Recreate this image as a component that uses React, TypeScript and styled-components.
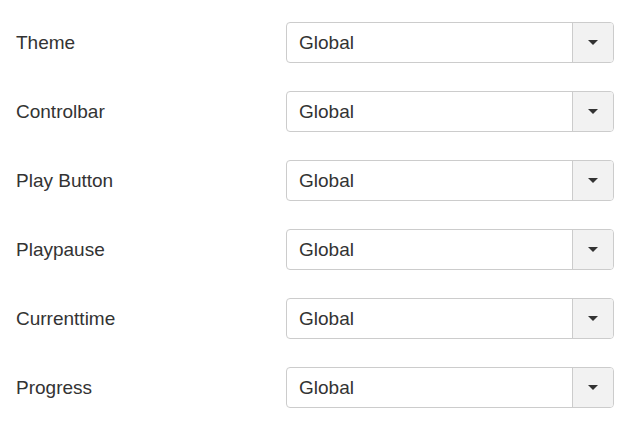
import React from "react";
import styled, { createGlobalStyle } from "styled-components";

const GlobalStyle = createGlobalStyle`
  html, body {
    margin: 0;
    padding: 0;
    background: #ffffff;
  }
  body {
    font-family: "Liberation Sans", Arial, sans-serif;
    color: #333333;
  }
`;

const Form = styled.div`
  display: flex;
  flex-direction: column;
  gap: 28px;
  padding: 22px 6px 0 16px;
  width: 620px;
  box-sizing: border-box;
`;

const Row = styled.div`
  display: flex;
  align-items: center;
  height: 41px;
`;

const Label = styled.label`
  width: 270px;
  font-size: 19px;
  color: #333333;
`;

const Select = styled.div`
  display: flex;
  width: 328px;
  height: 41px;
  box-sizing: border-box;
  border: 1px solid #cccccc;
  border-radius: 4px;
  background: #ffffff;
  overflow: hidden;
`;

const Value = styled.div`
  flex: 1;
  display: flex;
  align-items: center;
  padding-left: 12px;
  font-size: 19px;
  color: #333333;
`;

const Toggle = styled.div`
  width: 40px;
  display: flex;
  align-items: center;
  justify-content: center;
  background: #f2f2f2;
  border-left: 1px solid #cccccc;
`;

const Caret = styled.span`
  width: 0;
  height: 0;
  border-left: 5px solid transparent;
  border-right: 5px solid transparent;
  border-top: 5px solid #333333;
`;

const fields = ["Theme", "Controlbar", "Play Button", "Playpause", "Currenttime", "Progress"];

export default function App() {
  return (
    <>
      <GlobalStyle />
      <Form>
        {fields.map((f) => (
          <Row key={f}>
            <Label>{f}</Label>
            <Select>
              <Value>Global</Value>
              <Toggle>
                <Caret />
              </Toggle>
            </Select>
          </Row>
        ))}
      </Form>
    </>
  );
}
